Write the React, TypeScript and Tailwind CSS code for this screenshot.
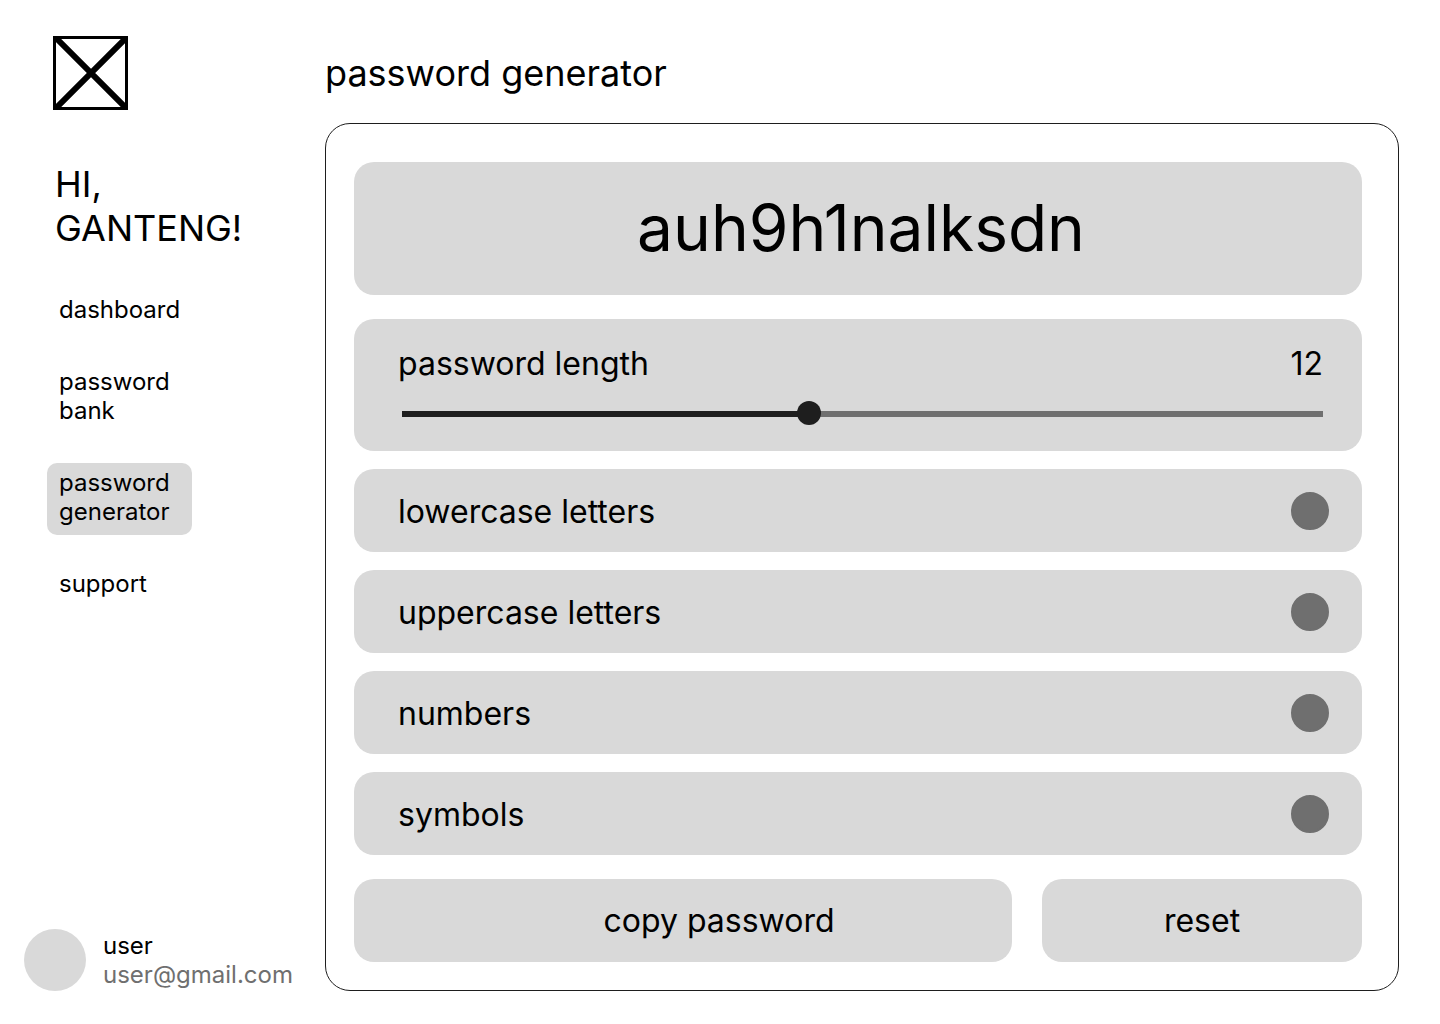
import { useState } from "react";

const PASSWORD = "auh9h1nalksdn";

const NAV = [
  { label: ["dashboard"], active: false },
  { label: ["password", "bank"], active: false },
  { label: ["password", "generator"], active: true },
  { label: ["support"], active: false },
];

const OPTIONS = ["lowercase letters", "uppercase letters", "numbers", "symbols"];

function Logo() {
  return (
    <svg width="75" height="74" viewBox="0 0 75 74" fill="none" stroke="#000" aria-label="Logo" role="img">
      <path d="M3 2L73 72M73 2L3 72" strokeWidth="6" />
      <rect x="1.5" y="1.5" width="72" height="71" strokeWidth="3" />
    </svg>
  );
}

function Sidebar() {
  return (
    <aside className="flex w-[301px] shrink-0 flex-col pt-9 pb-[33px] pl-6">
      <div className="pl-[29px]">
        <Logo />
      </div>
      <p className="mt-[52px] pl-[31px] text-4xl leading-[44px]">
        HI,
        <br />
        GANTENG!
      </p>
      <nav className="mt-10 flex flex-col items-start gap-[29px] pl-[23px] text-2xl leading-[29px]">
        {NAV.map((item) => (
          <a
            key={item.label.join(" ")}
            href="#"
            aria-current={item.active ? "page" : undefined}
            className={
              item.active
                ? "w-[145px] rounded-[10px] bg-[#d9d9d9] px-3 pt-[5px] pb-[9px]"
                : "w-[145px] px-3 pt-[5px] pb-[9px]"
            }
          >
            {item.label.map((line) => (
              <span key={line} className="block">
                {line}
              </span>
            ))}
          </a>
        ))}
      </nav>
      <div className="mt-auto flex items-center gap-[17px]">
        <div className="size-[62px] shrink-0 rounded-full bg-[#d9d9d9]" />
        <div className="text-2xl leading-[29px]">
          <p>user</p>
          <p className="text-[#6f6f6f]">user@gmail.com</p>
        </div>
      </div>
    </aside>
  );
}

function LengthSlider() {
  const [length, setLength] = useState(12);
  const min = 1;
  const max = 26;
  const percent = ((length - min) / (max - min)) * 100;
  return (
    <div className="mt-6 rounded-[20px] bg-[#d9d9d9] pt-[25px] pr-[39px] pb-[26px] pl-11">
      <div className="flex justify-between text-[32px] leading-[39px]">
        <label htmlFor="length">password length</label>
        <output htmlFor="length">{length}</output>
      </div>
      <div className="relative mt-[18px] ml-1 flex h-6 items-center pt-0.5">
        <div className="h-[6px] w-full bg-[#6f6f6f]">
          <div className="h-full bg-[#1e1e1e]" style={{ width: `${percent}%` }} />
        </div>
        <input
          id="length"
          type="range"
          min={min}
          max={max}
          value={length}
          onChange={(e) => setLength(Number(e.target.value))}
          className="absolute inset-0 h-6 w-full cursor-pointer appearance-none bg-transparent [&::-webkit-slider-thumb]:size-6 [&::-webkit-slider-thumb]:appearance-none [&::-webkit-slider-thumb]:rounded-full [&::-webkit-slider-thumb]:bg-[#1e1e1e]"
        />
      </div>
    </div>
  );
}

export default function App() {
  return (
    <div className="flex min-h-screen bg-white font-['Inter',sans-serif] text-black [font-variant-ligatures:none]">
      <Sidebar />
      <main className="flex min-w-0 flex-1 flex-col pt-[51px] pr-[41px] pb-[33px] pl-6">
        <h1 className="text-4xl leading-[44px]">password generator</h1>
        <section className="mt-7 flex-1 rounded-[25px] border border-[#1e1e1e] pt-[38px] pr-9 pb-7 pl-7">
          <div className="rounded-[20px] bg-[#d9d9d9] pt-[27px] pb-[28px] pl-[6px] text-center text-[64px] leading-[78px]">
            {PASSWORD}
          </div>
          <LengthSlider />
          <div className="mt-[18px] flex flex-col gap-[18px]">
            {OPTIONS.map((option) => (
              <label
                key={option}
                className="flex h-[83px] cursor-pointer items-center justify-between rounded-[20px] bg-[#d9d9d9] pr-[33px] pl-11 text-[32px] leading-[39px]"
              >
                <span className="pt-0.5">{option}</span>
                <input
                  type="checkbox"
                  defaultChecked
                  className="size-[38px] cursor-pointer appearance-none rounded-full border-2 border-[#6f6f6f] checked:bg-[#6f6f6f]"
                />
              </label>
            ))}
          </div>
          <div className="mt-6 flex gap-[30px] text-[32px] leading-[39px]">
            <button type="button" className="h-[83px] flex-1 cursor-pointer rounded-[20px] bg-[#d9d9d9] pl-[72px]">
              copy password
            </button>
            <button type="button" className="h-[83px] w-80 cursor-pointer rounded-[20px] bg-[#d9d9d9]">
              reset
            </button>
          </div>
        </section>
      </main>
    </div>
  );
}
